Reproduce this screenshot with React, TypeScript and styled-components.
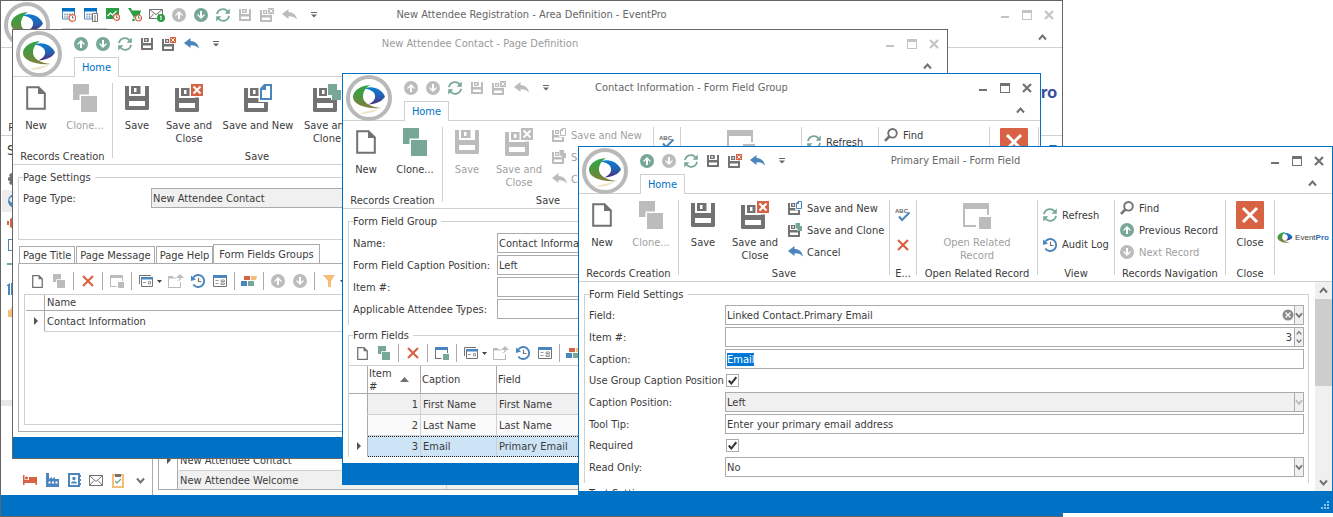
import React, { useEffect, useRef } from "react";
import styled, { createGlobalStyle, css } from "styled-components";

const C = {
  blue: "#0072c6",
  line: "#d0d0d0",
  border: "#ababab",
  text: "#3b3b3b",
  muted: "#9f9f9f",
  gray: "#727272",
  off: "#bcbcbc",
  green: "#77a797",
  steel: "#4a85bd",
  red: "#d86344",
  orange: "#f5bd78",
};

const GlobalStyle = createGlobalStyle`
  * { box-sizing: border-box; }
  html, body { margin: 0; background: #fff; overflow: hidden; }
  body, button, input, select, table, legend {
    font-family: "DejaVu Sans Condensed", "Noto Sans", sans-serif;
    font-size: 11px;
    line-height: 13px;
    color: ${C.text};
  }
  button { border: 0; padding: 0; background: none; }
  svg { display: block; flex: none; }
`;

/* ---------- icons ---------- */

type IconProps = { off?: boolean; small?: boolean };
const tone = (off: boolean | undefined, color: string) => (off ? C.off : color);

const ArrowIcon = ({ down, off }: { down?: boolean; off?: boolean }) => (
  <svg width="14" height="14" viewBox="0 0 14 14">
    <circle cx="7" cy="7" r="7" fill={tone(off, C.green)} />
    <path d="M7 3l3.500 3.500v1.700L8 5.900V11H6V5.900L3.500 8.200V6.500z" fill="#fff" transform={down ? "rotate(180 7 7)" : undefined} />
  </svg>
);

const RefreshIcon = () => (
  <svg width="14" height="14" viewBox="0 0 14 14" fill="none" stroke={C.green} strokeWidth="1.800">
    <path d="M1 6.200A6 6 0 0 1 11.500 3.300M13 7.800A6 6 0 0 1 2.500 10.700" />
    <path d="M13.800 .5v5.200H8.600zM.2 13.500V8.300h5.200z" fill={C.green} stroke="none" />
  </svg>
);

const saveBase =
  "M0 0h4v10h16V0h4v23l-1 1H1l-1-1zM4 15v5h16v-5zM6 0h9.500v8H6zM9 2v4h2.500V2z";

const SaveIcon = ({ off, small }: IconProps) => (
  <svg width={small ? 12 : 24} height={small ? 12 : 24} viewBox="0 0 24 24">
    <path d={saveBase} fill={tone(off, C.gray)} fillRule="evenodd" />
  </svg>
);

const SaveBadge = ({ off, small, kind }: IconProps & { kind: "close" | "new" | "clone" }) => (
  <svg width={small ? 14 : 28} height={small ? 14 : 28} viewBox="0 0 28 28">
    <path d={saveBase} transform="translate(0 4)" fill={tone(off, C.gray)} fillRule="evenodd" />
    {kind === "close" && (
      <>
        <path d="M14.500 0H28v13.500H14.500z" fill="#fff" />
        <path d="M16 0h12v12H16z" fill={tone(off, C.red)} />
        <path d="M18.500 2.500l7 7m0-7l-7 7" stroke="#fff" strokeWidth="2" />
      </>
    )}
    {kind === "new" && (
      <>
        <path d="M14.500 0H28v18H14.500z" fill="#fff" />
        <path d="M20.500 1H27v14H17V5z" fill="#fff" stroke={tone(off, C.steel)} strokeWidth="2" />
        <path d="M16 6V5l5-5h1v6z" fill={tone(off, C.steel)} />
      </>
    )}
    {kind === "clone" && (
      <>
        <path d="M14 0h11v6h3v10H18v-4h-4z" fill="#fff" />
        <path d="M15 0h9v6h4v10h-9v-5h-4z" fill={tone(off, C.green)} />
      </>
    )}
  </svg>
);

const UndoIcon = ({ off }: IconProps) => (
  <svg width="15" height="12" viewBox="0 0 15 12">
    <path d="M0 5L6.500 0v3c4.500 0 7.500 2.800 8.500 7.500C12.500 8 10 7.200 6.500 7.400V10z" fill={tone(off, C.steel)} />
  </svg>
);

const MoreIcon = () => (
  <svg width="6" height="6" viewBox="0 0 6 6" fill="#666">
    <path d="M0 0h6v1H0zM0 2.500h6L3 5.500z" />
  </svg>
);

const NewIcon = ({ small }: IconProps) => (
  <svg width={small ? 11 : 20} height={small ? 13 : 24} viewBox="0 0 20 24">
    <path d="M1.200 1.200h11.300l6.300 6.300v15.300H1.200z" fill="none" stroke={C.gray} strokeWidth={small ? 2.4 : 2} />
    <path d="M12 0l8 8h-8z" fill={C.gray} />
  </svg>
);

const CloneIcon = ({ off, small }: IconProps) => (
  <svg width={small ? 12 : 24} height={small ? 14 : 28} viewBox="0 0 24 28">
    <path d="M0 0h16v10.500H6.500V16H0zM8 12h16v16H8z" fill={tone(off, C.green)} />
  </svg>
);

const CrossIcon = () => (
  <svg width="12" height="12" viewBox="0 0 12 12" stroke={C.red} strokeWidth="2.200">
    <path d="M1 1l10 10M11 1L1 11" />
  </svg>
);

const OpenRelatedIcon = ({ off, small }: IconProps) => (
  <svg width={small ? 14 : 28} height={small ? 14 : 28} viewBox="0 0 28 28">
    <path d="M0 2h26v6H0z" fill={tone(off, C.steel)} />
    <path d="M0 8h2v16h11v2H0zM24 8h2v6h-2z" fill={tone(off, C.gray)} />
    <path d="M16 16h12v12H16z" fill={tone(off, C.green)} />
  </svg>
);

const SpellIcon = () => (
  <svg width="16" height="14" viewBox="0 0 16 14">
    <text x="0" y="5" fontSize="6" fontWeight="700" fontFamily="Liberation Sans, sans-serif" fill="#666">ABC</text>
    <path d="M4 8.500l3 3.500 7.500-7.500" fill="none" stroke={C.steel} strokeWidth="2" />
  </svg>
);

const HistoryIcon = () => (
  <svg width="15" height="14" viewBox="0 0 15 14" fill="none" stroke={C.steel} strokeWidth="1.900">
    <path d="M2.300 3.500A6 6 0 1 1 2.300 10.500" />
    <path d="M0 1.500l5 4L0 7z" fill={C.steel} stroke="none" />
    <path d="M7.500 3.800v3.700h3" stroke={C.gray} strokeWidth="1.200" />
  </svg>
);

const FindIcon = () => (
  <svg width="14" height="14" viewBox="0 0 14 14" fill="none" stroke={C.gray}>
    <circle cx="8.500" cy="5.300" r="4.300" strokeWidth="1.900" />
    <path d="M5.300 8.500L1 12.800" strokeWidth="2.600" />
  </svg>
);

const BigCloseIcon = () => (
  <svg width="28" height="28" viewBox="0 0 28 28">
    <rect width="28" height="28" rx="1" fill={C.red} />
    <path d="M7 7l14 14M21 7L7 21" stroke="#fff" strokeWidth="3" />
  </svg>
);

const ViewsIcon = () => (
  <svg width="14" height="12" viewBox="0 0 14 12" fill="none">
    <path d="M.5 9V.5H12" stroke={C.gray} />
    <path d="M2.500 2.500h11v9h-11z" fill="#fff" stroke={C.gray} />
    <path d="M2 2h12v2.500H2z" fill={C.steel} />
    <path d="M4 7.500h3M9.500 6.500h2v2.500h-2z" stroke="#999" />
  </svg>
);

const ExportIcon = () => (
  <svg width="16" height="14" viewBox="0 0 16 14" fill={C.off}>
    <path d="M0 2h5v1.500h3v1H1V13h11V8h1v6H0z" />
    <path d="M12 0l4 4h-3c0 2-1 3-4 3 2-1 2.500-1.500 2.500-3H8z" />
  </svg>
);

const FormIcon = () => (
  <svg width="14" height="12" viewBox="0 0 14 12" fill="none">
    <path d="M.5 .5h13v11H.5z" stroke={C.gray} />
    <path d="M0 0h14v3H0z" fill={C.steel} />
    <path d="M2.500 5.500h3M2.500 8.500h3M8 5h3.500v1.500H8zM8 8h3.500v1.500H8z" stroke="#999" />
  </svg>
);

const BlocksIcon = () => (
  <svg width="16" height="12" viewBox="0 0 16 12">
    <path d="M3 1h6v4H3z" fill={C.red} />
    <path d="M10 1h6l-1 4h-5z" fill={C.orange} />
    <path d="M0 6h6v5H0z" fill={C.steel} />
    <path d="M7 6h6v5H7z" fill={C.green} />
  </svg>
);

const FilterIcon = () => (
  <svg width="12" height="12" viewBox="0 0 12 12" fill={C.orange}>
    <path d="M0 0h12L8 6v6H5V6z" />
  </svg>
);

const Caret = () => (
  <svg width="5" height="3" viewBox="0 0 5 3" fill="#444">
    <path d="M0 0h5L2.500 3z" />
  </svg>
);

const Chevron = ({ up, color = C.gray, size = 9 }: { up?: boolean; color?: string; size?: number }) => (
  <svg width={size} height={size} viewBox="0 0 9 9" fill="none" stroke={color} strokeWidth="2">
    <path d={up ? "M1 6.500l3.500-4 3.500 4" : "M1 2.500l3.500 4 3.500-4"} />
  </svg>
);

const Swoosh = ({ id, width, shadow }: { id: string; width: number; shadow?: boolean }) => (
  <svg width={width} height={width} viewBox="0 0 34 34">
    <defs>
      <linearGradient id={`${id}g`} x1="0" y1="0" x2="0" y2="1">
        <stop offset="0" stopColor="#2ca648" />
        <stop offset=".5" stopColor="#4f9440" />
        <stop offset="1" stopColor="#82803a" />
      </linearGradient>
      <linearGradient id={`${id}b`} x1="0" y1="0" x2="0" y2="1">
        <stop offset="0" stopColor="#0b7fd6" />
        <stop offset=".6" stopColor="#2a5aa8" />
        <stop offset="1" stopColor="#4b2a7b" />
      </linearGradient>
    </defs>
    {shadow && <path d="M8 33c2-2 8-3 19-5-4 3-12 5-19 5z" fill="#f0e4c8" />}
    <path d="M18 4C8 4.500 1 10 1 16c0 7 12 12.500 28 11-11-1-18-5.500-18-11.500C11 10.500 14 6.500 18 4z" fill={`url(#${id}g)`} />
    <path d="M13 7.500C21 4 30 8.500 33 15.500 31 20 24 23 16 23.500c5-2 7.500-5 7-9C22.500 10.500 18 8.500 13 7.500z" fill={`url(#${id}b)`} />
  </svg>
);

/* ---------- window chrome ---------- */

const Desktop = styled.main`
  position: relative;
  min-height: 100vh;
  overflow: hidden;
`;

const Frame = styled.section<{ $top: number; $left: number; $right: number; $bottom: number; $dark?: boolean }>`
  position: absolute;
  top: ${(p) => p.$top}px;
  left: ${(p) => p.$left}px;
  right: ${(p) => p.$right}px;
  bottom: ${(p) => p.$bottom}px;
  display: flex;
  flex-direction: column;
  overflow: hidden;
  background: #fff;
  border: 1px solid ${(p) => (p.$dark ? "#666" : C.blue)};
`;

const Orb = styled.button`
  position: absolute;
  top: 1px;
  left: 3px;
  width: 46px;
  height: 46px;
  display: grid;
  place-items: center;
  background: #fff;
  border: 4px solid #b9b9b9;
  border-radius: 50%;
`;

const TitleBar = styled.header`
  flex: none;
  height: 27px;
  display: grid;
  grid-template-columns: 1fr auto 1fr;
  align-items: center;
`;

const QuickBar = styled.div`
  display: flex;
  padding-left: 57px;
`;

const QuickButton = styled.button`
  width: 22px;
  height: 22px;
  display: grid;
  place-items: center;
`;

const MoreButton = styled(QuickButton)`
  width: 28px;
`;

const Title = styled.h1<{ $dim?: boolean }>`
  margin: 0;
  font-size: 11px;
  font-weight: 400;
  color: ${(p) => (p.$dim ? "#9a9a9a" : "#666")};
`;

const WindowButtons = styled.div`
  display: flex;
  justify-content: flex-end;
  padding-right: 2px;
`;

const TabRow = styled.nav`
  flex: none;
  height: 20px;
  display: flex;
  justify-content: space-between;
  padding: 0 15px 0 61px;
  border-bottom: 1px solid ${C.line};
`;

const HomeTab = styled.button`
  height: 20px;
  width: 45px;
  background: #fff;
  border: 1px solid ${C.line};
  border-bottom: 0;
  color: ${C.blue};
`;

const Body = styled.div`
  flex: 1;
  min-height: 0;
  display: flex;
  flex-direction: column;
  padding: 6px 5px 5px;
`;

const StatusBar = styled.footer`
  flex: none;
  display: flex;
  justify-content: flex-end;
  align-items: flex-end;
  height: 21px;
  padding: 2px;
  background: ${C.blue};
`;

const Grip = () => (
  <svg width="9" height="9" viewBox="0 0 9 9" fill="#8fc0e6">
    <path d="M6 0h2v2H6zM3 3h2v2H3zM6 3h2v2H6zM0 6h2v2H0zM3 6h2v2H3zM6 6h2v2H6z" />
  </svg>
);

type WindowProps = {
  id: string;
  title: string;
  at: [number, number, number, number];
  quick: React.ReactNode[];
  ribbon: React.ReactNode;
  dark?: boolean;
  dimTitle?: boolean;
  children: React.ReactNode;
};

const Window = ({ id, title, at, quick, ribbon, dark, dimTitle, children }: WindowProps) => {
  const ink = dark ? "#c4c4c4" : C.gray;
  return (
    <Frame $top={at[0]} $right={at[1]} $bottom={at[2]} $left={at[3]} $dark={dark} aria-label={title}>
      <TitleBar>
        <QuickBar>
          {quick.map((icon, i) => (
            <QuickButton key={i}>{icon}</QuickButton>
          ))}
          <MoreButton aria-label="Customize">
            <MoreIcon />
          </MoreButton>
        </QuickBar>
        <Title $dim={dimTitle}>{title}</Title>
        <WindowButtons>
          <QuickButton aria-label="Minimize">
            <svg width="10" height="10" viewBox="0 0 10 10"><path d="M1 6h8v2H1z" fill={ink} /></svg>
          </QuickButton>
          <QuickButton aria-label="Maximize">
            <svg width="10" height="10" viewBox="0 0 10 10"><path d="M0 0h10v10H0zM1 3v6h8V3z" fill={ink} fillRule="evenodd" /></svg>
          </QuickButton>
          <QuickButton aria-label="Close window">
            <svg width="10" height="10" viewBox="0 0 10 10" stroke={ink} strokeWidth="2.200"><path d="M1 1l8 8M9 1L1 9" /></svg>
          </QuickButton>
        </WindowButtons>
      </TitleBar>
      <TabRow>
        <HomeTab>Home</HomeTab>
        <button aria-label="Collapse ribbon">
          <Chevron up />
        </button>
      </TabRow>
      {ribbon}
      {children}
      <StatusBar>
        <Grip />
      </StatusBar>
      <Orb aria-label="Application menu">
        <Swoosh id={id} width={34} shadow />
      </Orb>
    </Frame>
  );
};

/* ---------- ribbon ---------- */

const RibbonBar = styled.div`
  flex: none;
  display: flex;
  height: 88px;
  border-bottom: 1px solid ${C.line};
`;

const Group = styled.section<{ $width: number }>`
  flex: none;
  width: ${(p) => p.$width}px;
  display: flex;
  flex-direction: column;
  justify-content: space-between;
  padding: 3px 0 1px;
`;

const GroupItems = styled.div<{ $center?: boolean }>`
  height: 66px;
  display: flex;
  justify-content: ${(p) => (p.$center ? "center" : "flex-start")};
`;

const GroupCaption = styled.div`
  text-align: center;
  white-space: nowrap;
`;

const Divider = styled.span`
  flex: none;
  width: 1px;
  margin: 6px 0;
  background: ${C.line};
`;

const BigButton = styled.button<{ $width: number }>`
  flex: none;
  width: ${(p) => p.$width}px;
  display: flex;
  flex-direction: column;
  align-items: center;
  gap: 7px;
  padding-top: 4px;
  &:disabled { color: ${C.muted}; }
`;

const IconBox = styled.span`
  height: 28px;
  display: grid;
  place-items: center;
`;

const SmallList = styled.div`
  flex: 1;
  display: flex;
  flex-direction: column;
  justify-content: space-evenly;
`;

const SmallButton = styled.button`
  height: 22px;
  display: grid;
  grid-template-columns: 15px auto;
  gap: 4px;
  align-items: center;
  justify-items: start;
  justify-content: start;
  padding-left: 5px;
  white-space: nowrap;
  &:disabled { color: ${C.muted}; }
`;

const Brand = styled.div<{ $large?: boolean }>`
  flex: 1;
  display: flex;
  align-items: center;
  justify-content: ${(p) => (p.$large ? "flex-end" : "center")};
  gap: 2px;
  padding-right: ${(p) => (p.$large ? 5 : 1)}px;
  font-family: ${(p) => (p.$large ? "Lato" : "\"Liberation Sans\"")}, sans-serif;
  font-size: ${(p) => (p.$large ? 17 : 8)}px;
  line-height: 20px;
  b {
    font-weight: ${(p) => (p.$large ? 900 : 700)};
    color: ${(p) => (p.$large ? "#3a4f9c" : "#2f6fb5")};
  }
`;

const BrandName = ({ id, large }: { id: string; large?: boolean }) => (
  <Brand $large={large}>
    <Swoosh id={id} width={large ? 34 : 16} />
    <span>
      Event<b>Pro</b>
    </span>
  </Brand>
);

const Big = ({ icon, label, width, off }: { icon: React.ReactNode; label: string; width: number; off?: boolean }) => (
  <BigButton $width={width} disabled={off}>
    <IconBox>{icon}</IconBox>
    <span>{label}</span>
  </BigButton>
);

const Small = ({ icon, label, off }: { icon: React.ReactNode; label: string; off?: boolean }) => (
  <SmallButton disabled={off}>
    {icon}
    <span>{label}</span>
  </SmallButton>
);

const IconOnly = styled.button`
  height: 22px;
  display: grid;
  place-items: center;
`;

const RecordsCreation = ({ cloneOff }: { cloneOff?: boolean }) => (
  <Group $width={99}>
    <GroupItems>
      <Big icon={<NewIcon />} label="New" width={46} />
      <Big icon={<CloneIcon off={cloneOff} />} label="Clone..." width={52} off={cloneOff} />
    </GroupItems>
    <GroupCaption>Records Creation</GroupCaption>
  </Group>
);

const FullRibbon = ({ brand, saveOff, cloneOff }: { brand?: boolean; saveOff?: boolean; cloneOff?: boolean }) => (
  <RibbonBar>
    <RecordsCreation cloneOff={cloneOff} />
    <Divider />
    <Group $width={210}>
      <GroupItems>
        <Big icon={<SaveIcon off={saveOff} />} label="Save" width={48} off={saveOff} />
        <Big icon={<SaveBadge kind="close" off={saveOff} />} label="Save and Close" width={56} off={saveOff} />
        <SmallList>
          <Small icon={<SaveBadge kind="new" small off={saveOff} />} label="Save and New" off={saveOff} />
          <Small icon={<SaveBadge kind="clone" small off={saveOff} />} label="Save and Clone" off={saveOff} />
          <Small icon={<UndoIcon off={saveOff} />} label="Cancel" off={saveOff} />
        </SmallList>
      </GroupItems>
      <GroupCaption>Save</GroupCaption>
    </Group>
    <Divider />
    <Group $width={26}>
      <GroupItems>
        <SmallList>
          <IconOnly aria-label="Check spelling"><SpellIcon /></IconOnly>
          <IconOnly aria-label="Delete"><CrossIcon /></IconOnly>
        </SmallList>
      </GroupItems>
      <GroupCaption>E...</GroupCaption>
    </Group>
    <Divider />
    <Group $width={120}>
      <GroupItems $center>
        <Big icon={<OpenRelatedIcon off />} label="Open Related Record" width={80} off />
      </GroupItems>
      <GroupCaption>Open Related Record</GroupCaption>
    </Group>
    <Divider />
    <Group $width={76}>
      <GroupItems>
        <SmallList>
          <Small icon={<RefreshIcon />} label="Refresh" />
          <Small icon={<HistoryIcon />} label="Audit Log" />
        </SmallList>
      </GroupItems>
      <GroupCaption>View</GroupCaption>
    </Group>
    <Divider />
    <Group $width={110}>
      <GroupItems>
        <SmallList>
          <Small icon={<FindIcon />} label="Find" />
          <Small icon={<ArrowIcon />} label="Previous Record" />
          <Small icon={<ArrowIcon down off />} label="Next Record" off />
        </SmallList>
      </GroupItems>
      <GroupCaption>Records Navigation</GroupCaption>
    </Group>
    <Divider />
    <Group $width={48}>
      <GroupItems>
        <Big icon={<BigCloseIcon />} label="Close" width={48} />
      </GroupItems>
      <GroupCaption>Close</GroupCaption>
    </Group>
    <Divider />
    {brand && <BrandName id="field-brand" />}
  </RibbonBar>
);

const PageRibbon = () => (
  <RibbonBar>
    <RecordsCreation cloneOff />
    <Divider />
    <Group $width={288}>
      <GroupItems>
        <Big icon={<SaveIcon />} label="Save" width={48} />
        <Big icon={<SaveBadge kind="close" />} label="Save and Close" width={56} />
        <Big icon={<SaveBadge kind="new" />} label="Save and New" width={82} />
        <Big icon={<SaveBadge kind="clone" />} label="Save and Clone" width={56} />
      </GroupItems>
      <GroupCaption>Save</GroupCaption>
    </Group>
    <Divider />
  </RibbonBar>
);

const AreaRibbon = () => (
  <RibbonBar>
    <RecordsCreation />
    <BrandName id="area-brand" large />
  </RibbonBar>
);

/* ---------- forms ---------- */

const Fieldset = styled.fieldset<{ $open?: boolean; $pad?: number; $end?: number }>`
  flex: none;
  min-width: 0;
  display: flex;
  flex-direction: column;
  gap: 2px;
  margin: 0 0 4px;
  padding: ${(p) => p.$pad ?? 4}px 4px ${(p) => p.$end ?? 6}px;
  border: 1px solid ${C.line};
  ${(p) => p.$open && css`border-bottom: 0;`}
  legend { padding: 0 4px 0 0; }
`;

const Row = styled.div<{ $label: number; $check?: boolean }>`
  display: grid;
  grid-template-columns: ${(p) => p.$label}px minmax(0, 1fr);
  align-items: center;
  height: ${(p) => (p.$check ? 19 : 20)}px;
  white-space: nowrap;
`;

const TextBox = styled.input`
  width: 100%;
  height: 20px;
  padding: 0 1px;
  background: #fff;
  border: 1px solid ${C.border};
  border-radius: 0;
  outline: 0;
  &:disabled { background: #f0f0f0; color: ${C.text}; }
  &::selection { background: #0078d7; color: #fff; }
`;

const ComboFrame = styled.div<{ $off?: boolean }>`
  display: flex;
  align-items: center;
  height: 20px;
  background: ${(p) => (p.$off ? "#f0f0f0" : "#fff")};
  border: 1px solid ${C.border};
`;

const ComboSelect = styled.select`
  flex: 1;
  min-width: 0;
  padding: 0 1px;
  appearance: none;
  background: none;
  border: 0;
  outline: 0;
  &:disabled { color: ${C.text}; opacity: 1; }
`;

const NumberBox = styled.input`
  flex: 1;
  min-width: 0;
  padding: 0 2px;
  background: none;
  border: 0;
  outline: 0;
  text-align: right;
`;

const ComboArrow = styled.span`
  align-self: stretch;
  width: 9px;
  display: flex;
  flex-direction: column;
  align-items: center;
  justify-content: space-evenly;
  background: #f0f0f0;
  border-left: 1px solid ${C.border};
`;

const CheckCell = styled.span`
  display: grid;
  width: 15px;
  padding: 0 1px;
  place-items: center;
  > * { grid-area: 1 / 1; }
  svg { pointer-events: none; }
`;

const CheckInput = styled.input`
  width: 13px;
  height: 13px;
  margin: 0;
  appearance: none;
  background: #fff;
  border: 1px solid ${C.border};
`;

const Combo = ({ id, value, off, clear }: { id: string; value: string; off?: boolean; clear?: boolean }) => (
  <ComboFrame $off={off}>
    <ComboSelect id={id} disabled={off} defaultValue={value}>
      <option>{value}</option>
    </ComboSelect>
    {clear && (
      <button aria-label="Clear">
        <svg width="12" height="12" viewBox="0 0 12 12">
          <circle cx="6" cy="6" r="5.500" fill="#8a8a8a" />
          <path d="M3.500 3.500l5 5m0-5l-5 5" stroke="#fff" strokeWidth="1.200" />
        </svg>
      </button>
    )}
    <ComboArrow>
      <Chevron size={8} color={off ? "#bbb" : C.gray} />
    </ComboArrow>
  </ComboFrame>
);

const Check = ({ id }: { id: string }) => (
  <CheckCell>
    <CheckInput id={id} type="checkbox" defaultChecked />
    <svg width="9" height="9" viewBox="0 0 9 9" fill="none" stroke="#333" strokeWidth="2">
      <path d="M.8 4.500L3.300 7.500 8.300 1.200" />
    </svg>
  </CheckCell>
);

/* ---------- toolbar and grids ---------- */

const Toolbar = styled.div<{ $indent: number }>`
  flex: none;
  display: flex;
  align-items: center;
  height: 22px;
  padding-left: ${(p) => p.$indent}px;
  overflow: hidden;
`;

const ToolSplit = styled.span`
  flex: none;
  width: 1px;
  height: 18px;
  margin: 0 3px;
  background: ${C.border};
`;

const ToolButton = styled.button`
  flex: none;
  width: 22px;
  height: 22px;
  display: grid;
  place-items: center;
`;

const CaretButton = styled(ToolButton)`
  width: 8px;
  justify-items: start;
`;

const RecordToolbar = ({ indent, editable }: { indent: number; editable?: boolean }) => (
  <Toolbar $indent={indent} role="toolbar">
    <ToolButton aria-label="New"><NewIcon small /></ToolButton>
    <ToolButton aria-label="Clone"><CloneIcon small off={!editable} /></ToolButton>
    <ToolSplit />
    <ToolButton aria-label="Delete"><CrossIcon /></ToolButton>
    <ToolSplit />
    <ToolButton aria-label="Open related record"><OpenRelatedIcon small off={!editable} /></ToolButton>
    <ToolSplit />
    <ToolButton aria-label="Views"><ViewsIcon /></ToolButton>
    <CaretButton aria-label="More views"><Caret /></CaretButton>
    <ToolButton aria-label="Export"><ExportIcon /></ToolButton>
    <ToolButton aria-label="History"><HistoryIcon /></ToolButton>
    <ToolButton aria-label="Layout"><FormIcon /></ToolButton>
    <ToolSplit />
    <ToolButton aria-label="Group"><BlocksIcon /></ToolButton>
    <ToolSplit />
    <ToolButton aria-label="Move up"><ArrowIcon off /></ToolButton>
    <ToolButton aria-label="Move down"><ArrowIcon off down /></ToolButton>
    <ToolSplit />
    <ToolButton aria-label="Filter"><FilterIcon /></ToolButton>
    <CaretButton aria-label="Filter options"><Caret /></CaretButton>
  </Toolbar>
);

const Marker = () => (
  <svg width="4" height="8" viewBox="0 0 4 8" fill="#555">
    <path d="M0 0l4 4-4 4z" />
  </svg>
);

const DataTable = styled.table<{ $selector: number }>`
  width: 100%;
  table-layout: fixed;
  border-collapse: separate;
  border-spacing: 0;
  th, td {
    height: 21px;
    padding: 0 2px;
    text-align: left;
    font-weight: 400;
    white-space: nowrap;
    overflow: hidden;
    border-right: 1px solid ${C.line};
    border-bottom: 1px solid ${C.line};
  }
  th { border-color: ${C.border}; }
  th:first-child, td:first-child {
    width: ${(p) => p.$selector}px;
    padding-left: 8px;
    background: #fff;
    border-right-color: ${C.border};
  }
  td:first-child { border-bottom-color: transparent; }
`;

const PageTable = styled(DataTable)`
  th { height: 16px; }
`;

const FieldTable = styled(DataTable)`
  border-top: 1px solid ${C.line};
  th { height: 28px; padding: 0 1px; white-space: normal; }
  th:nth-child(2) { width: 53px; padding-right: 11px; }
  th:nth-child(3) { width: 76px; }
  td:nth-child(2) { text-align: right; }
`;

const HeadCell = styled.span`
  display: flex;
  align-items: center;
  justify-content: space-between;
`;

const FieldRow = styled.tr<{ $bg: string; $current?: boolean }>`
  td { background: ${(p) => p.$bg}; }
  ${(p) =>
    p.$current &&
    css`
      td:not(:first-child) {
        border-bottom: 1px dotted #222;
        background-image: linear-gradient(90deg, #222 50%, transparent 50%);
        background-size: 2px 1px;
        background-repeat: repeat-x;
      }
    `}
`;

/* ---------- page window ---------- */

const PageTabs = styled.div`
  flex: none;
  display: flex;
  align-items: flex-end;
  height: 19px;
  padding-left: 1px;
`;

const PageTab = styled.button<{ $active?: boolean }>`
  height: 17px;
  padding: 0 3px;
  margin-right: 1px;
  background: #fff;
  border: 1px solid ${C.border};
  border-bottom: 0;
  white-space: nowrap;
  ${(p) =>
    p.$active &&
    css`
      height: 20px;
      margin: 0 0 -1px -1px;
      padding: 0 5px;
    `}
`;

const PagePanel = styled.div`
  flex: 1;
  display: flex;
  flex-direction: column;
  gap: 2px;
  padding: 6px 5px 6px;
  border: 1px solid ${C.border};
`;

const GridBox = styled.div`
  flex: 1;
  padding-left: 1px;
  border: 1px solid ${C.line};
`;

/* ---------- area window ---------- */

const AreaBody = styled.div`
  flex: 1;
  min-height: 0;
  display: flex;
`;

const Sidebar = styled.aside`
  flex: none;
  width: 152px;
  display: flex;
  flex-direction: column;
  border-right: 1px solid ${C.border};
`;

const SideTitle = styled.h2`
  margin: 0;
  height: 32px;
  padding: 6px;
  font-size: 14px;
  line-height: 17px;
  font-weight: 400;
`;

const SideItem = styled.button<{ $current?: boolean }>`
  flex: none;
  height: 22px;
  margin-left: 1px;
  padding-left: 5px;
  background: ${(p) => (p.$current ? "#ededed" : "#fff")};
`;

const SideFill = styled.div`
  flex: 1;
`;

const Splitter = styled.div`
  flex: none;
  height: 6px;
  margin-bottom: 60px;
  background: #e6e8ea;
`;

const SideFooter = styled.div`
  flex: none;
  display: flex;
  height: 29px;
  padding: 3px 0 4px 18px;
`;

const AreaMain = styled.div`
  flex: 1;
  display: flex;
  flex-direction: column;
  justify-content: space-between;
  padding: 8px 5px 5px;
`;

const AreaMenu = styled.button`
  align-self: flex-end;
  height: 6px;
`;

const AreaTable = styled(DataTable)`
  border-left: 1px solid ${C.border};
  border-bottom: 1px solid ${C.border};
  td { padding: 0 2px; }
  td:nth-child(2) { width: 269px; }
  tr:last-child td { height: 18px; border-bottom: 0; }
  tr:last-child td:not(:first-child) { background: #f0f0f0; }
`;

const BedIcon = () => (
  <svg width="14" height="12" viewBox="0 0 14 12" fill={C.red}>
    <path d="M0 1h1.500v5H14v5h-1.500V9h-11v2H0z" />
    <path d="M6 3h8v3H6z" />
    <circle cx="3.500" cy="4" r="1.600" />
  </svg>
);

const FactoryIcon = () => (
  <svg width="13" height="14" viewBox="0 0 13 14">
    <path d="M0 0h3v6l3-2v2l3-2v2h4v8H0z" fill={C.steel} />
    <path d="M2.500 8.500h2v2h-2zM6 8.500h2v2H6zM9.500 8.500h2v2h-2z" fill="#fff" />
  </svg>
);

const ContactIcon = () => (
  <svg width="13" height="14" viewBox="0 0 13 14">
    <path d="M1 1h10v12H1z" fill="none" stroke={C.steel} strokeWidth="2" />
    <circle cx="6" cy="5.500" r="1.700" fill={C.steel} />
    <path d="M3 10.500c0-3 6-3 6 0zM12 2h1v2h-1zM12 6h1v2h-1zM12 10h1v2h-1z" fill={C.steel} />
  </svg>
);

const MailIcon = () => (
  <svg width="14" height="11" viewBox="0 0 14 11" fill="none" stroke={C.gray}>
    <path d="M.5 .5h13v10H.5zM.5 .5L7 6.500l6.500-6M.5 10.500l4.500-5M13.500 10.500L9 5.500" />
  </svg>
);

const TaskIcon = () => (
  <svg width="12" height="15" viewBox="0 0 12 15">
    <path d="M1 2h10v12H1z" fill="#fff" stroke={C.orange} strokeWidth="2" />
    <path d="M3 1h6v3H3z" fill={C.gray} />
    <path d="M3 8l2 2 4-4" fill="none" stroke={C.green} strokeWidth="1.300" />
  </svg>
);

const CalendarIcon = ({ clock }: { clock?: boolean }) => (
  <svg width="14" height="14" viewBox="0 0 14 14">
    <path d="M.5 1h12v10H.5z" fill="#fff" stroke={C.steel} />
    <path d="M0 0h13v3.500H0z" fill={C.blue} />
    <path d="M3 5v5M5.500 5v5M8 5v5M10.500 5v5M2 6.500h9M2 9h9" stroke="#9ab" strokeWidth=".8" />
    {clock ? (
      <>
        <circle cx="10.500" cy="10" r="3.300" fill="#fff" stroke={C.red} strokeWidth="1.200" />
        <path d="M10.500 8v2h1.500" fill="none" stroke="#555" strokeWidth=".8" />
      </>
    ) : (
      <path d="M8.500 5.500h5v8h-5zM10 8h2M10 10h2M10 12h2" fill="#fff" stroke={C.gray} />
    )}
  </svg>
);

const ChartClockIcon = () => (
  <svg width="14" height="13" viewBox="0 0 14 13">
    <path d="M0 0h13v11H0z" fill="#2b9d44" />
    <path d="M1.500 8l3-3 2 2 4-4" fill="none" stroke="#fff" strokeWidth="1.200" />
    <circle cx="10.500" cy="9.300" r="3" fill="#fff" stroke={C.red} strokeWidth="1.200" />
    <path d="M10.500 7.500v2H12" fill="none" stroke="#555" strokeWidth=".8" />
  </svg>
);

const CartIcon = () => (
  <svg width="14" height="14" viewBox="0 0 14 14">
    <path d="M0 0h3l1 2.500h9L11.500 8H5z" fill="#2b9d44" />
    <path d="M5 9h5" stroke="#2b9d44" strokeWidth="1.300" />
    <circle cx="5.500" cy="12" r="1.300" fill="#2b9d44" />
    <circle cx="10.500" cy="10" r="3" fill="#fff" stroke={C.red} strokeWidth="1.200" />
    <path d="M10.500 8.200v2H12" fill="none" stroke="#555" strokeWidth=".8" />
  </svg>
);

const MailCountIcon = () => (
  <svg width="16" height="14" viewBox="0 0 16 14">
    <path d="M.5 1.500h13v9H.5zM.5 1.500L7 6.500l6.500-5M.5 10.500l4.500-5M13.500 10.500L9 5.500" fill="none" stroke={C.gray} />
    <circle cx="12" cy="10" r="4" fill="#2b9d44" />
    <path d="M11 8.500l1-.5v4" fill="none" stroke="#fff" />
  </svg>
);

const SideGlyph = ({ d, color }: { d: string; color: string }) => (
  <svg width="16" height="16" viewBox="0 0 16 16" fill={color} fillRule="evenodd">
    <path d={d} />
  </svg>
);

const sideItems = [
  { name: "General", color: C.gray, d: "M6.500 1h3l.5 2 2-1 2 2-1 2 2 .5v3l-2 .5 1 2-2 2-2-1-.5 2h-3L6 13l-2 1-2-2 1-2-2-.5v-3L3 6 2 4l2-2 2 1zM8 5.500a2.500 2.500 0 1 0 .1 0z" },
  { name: "Web", color: C.steel, d: "M8 1a7 7 0 1 0 .1 0zM4 4l3 1 1 3-3 2-3-3z" },
  { name: "Audio", color: C.red, d: "M0 6h2v4H0zM3 4l5-3v14l-5-3z" },
  { name: "Codes", color: C.steel, d: "M1 2h14v12H1zM2 3v10h12V3zM8 5a3 3 0 1 0 .1 0z" },
  { name: "Flow", color: C.green, d: "M0 4h5V2l4 3-4 3V6H0zM8 10h6v4H8z" },
  { name: "Venue", color: C.steel, d: "M0 4l3-2v12H1V5H0zM4 2h10v12H4z" },
  { name: "Locks", color: C.orange, d: "M1 7h2l3-5h6v12H1z" },
];

/* ---------- scrolling area ---------- */

const ScrollArea = styled.div`
  flex: 1;
  min-height: 0;
  display: flex;
`;

const ScrollBody = styled.div`
  flex: 1;
  min-width: 0;
  padding: 6px 6px 0 5px;
  overflow: hidden;
`;

const ScrollTrack = styled.div`
  flex: none;
  width: 17px;
  display: flex;
  flex-direction: column;
  background: #f0f0f0;
`;

const ScrollArrow = styled.button`
  height: 17px;
  display: grid;
  place-items: center;
`;

const ScrollThumb = styled.div`
  height: 87px;
  margin-bottom: auto;
  background: #cdcdcd;
`;

const FieldsBox = styled(Fieldset)`
  gap: 1px;
  margin: 0;
  padding: 0;
  border-bottom: 0;
  legend { margin-left: 4px; }
`;

/* ---------- app ---------- */

export default function App() {
  const caption = useRef<HTMLInputElement>(null);

  useEffect(() => {
    caption.current?.focus({ preventScroll: true });
    caption.current?.select();
  }, []);

  return (
    <Desktop>
      <GlobalStyle />

      <Window
        id="area"
        title="New Attendee Registration - Area Definition - EventPro"
        at={[0, 270, 0, 0]}
        dark
        quick={[
          <CalendarIcon clock />, <CalendarIcon />, <ChartClockIcon />, <CartIcon />, <MailCountIcon />,
          <ArrowIcon off />, <ArrowIcon down />, <RefreshIcon />, <SaveIcon small off />,
          <SaveBadge small off kind="close" />, <UndoIcon off />,
        ]}
        ribbon={<AreaRibbon />}
      >
        <AreaBody>
          <Sidebar>
            <SideTitle>Settings</SideTitle>
            {sideItems.map((item, i) => (
              <SideItem key={item.name} $current={i === 1} aria-label={item.name}>
                <SideGlyph d={item.d} color={item.color} />
              </SideItem>
            ))}
            <SideFill />
            <Splitter />
            <SideFooter>
              <ToolButton aria-label="Housing"><BedIcon /></ToolButton>
              <ToolButton aria-label="Companies"><FactoryIcon /></ToolButton>
              <ToolButton aria-label="Contacts"><ContactIcon /></ToolButton>
              <ToolButton aria-label="Mail"><MailIcon /></ToolButton>
              <ToolButton aria-label="Tasks"><TaskIcon /></ToolButton>
              <ToolButton aria-label="More areas"><Chevron /></ToolButton>
            </SideFooter>
          </Sidebar>
          <AreaMain>
            <AreaMenu aria-label="Area menu">
              <svg width="8" height="5" viewBox="0 0 8 5" fill={C.blue}><path d="M0 0h8L4 5z" /></svg>
            </AreaMenu>
            <AreaTable $selector={19}>
              <tbody>
                <tr>
                  <td><Marker /></td>
                  <td>New Attendee Contact</td>
                  <td />
                </tr>
                <tr>
                  <td />
                  <td>New Attendee Welcome</td>
                  <td />
                </tr>
              </tbody>
            </AreaTable>
          </AreaMain>
        </AreaBody>
      </Window>

      <Window
        id="page"
        title="New Attendee Contact - Page Definition"
        at={[29, 385, 58, 12]}
        dark
        dimTitle
        quick={[
          <ArrowIcon />, <ArrowIcon down />, <RefreshIcon />, <SaveIcon small />,
          <SaveBadge small kind="close" />, <UndoIcon />,
        ]}
        ribbon={<PageRibbon />}
      >
        <Body>
          <Fieldset $end={31}>
            <legend>Page Settings</legend>
            <Row $label={128}>
              <label htmlFor="page-type">Page Type:</label>
              <TextBox id="page-type" defaultValue="New Attendee Contact" disabled />
            </Row>
          </Fieldset>
          <PageTabs role="tablist">
            <PageTab role="tab">Page Title</PageTab>
            <PageTab role="tab">Page Message</PageTab>
            <PageTab role="tab">Page Help</PageTab>
            <PageTab role="tab" $active aria-selected>Form Fields Groups</PageTab>
          </PageTabs>
          <PagePanel>
            <RecordToolbar indent={2} />
            <GridBox>
              <PageTable $selector={19}>
                <thead>
                  <tr><th /><th>Name</th></tr>
                </thead>
                <tbody>
                  <tr><td><Marker /></td><td>Contact Information</td></tr>
                </tbody>
              </PageTable>
            </GridBox>
          </PagePanel>
        </Body>
      </Window>

      <Window
        id="group"
        title="Contact Information - Form Field Group"
        at={[73, 292, 32, 342]}
        quick={[
          <ArrowIcon off />, <ArrowIcon off down />, <RefreshIcon />, <SaveIcon small off />,
          <SaveBadge small off kind="close" />, <UndoIcon off />,
        ]}
        ribbon={<FullRibbon saveOff />}
      >
        <Body>
          <Fieldset $open $pad={5}>
            <legend>Form Field Group</legend>
            <Row $label={144}>
              <label htmlFor="group-name">Name:</label>
              <TextBox id="group-name" defaultValue="Contact Information" />
            </Row>
            <Row $label={144}>
              <label htmlFor="group-caption">Form Field Caption Position:</label>
              <Combo id="group-caption" value="Left" />
            </Row>
            <Row $label={144}>
              <label htmlFor="group-item">Item #:</label>
              <TextBox id="group-item" />
            </Row>
            <Row $label={144}>
              <label htmlFor="group-types">Applicable Attendee Types:</label>
              <TextBox id="group-types" />
            </Row>
          </Fieldset>
          <FieldsBox>
            <legend>Form Fields</legend>
            <RecordToolbar indent={2} editable />
            <FieldTable $selector={19}>
              <thead>
                <tr>
                  <th />
                  <th>
                    <HeadCell>
                      <span>Item<br />#</span>
                      <svg width="9" height="5" viewBox="0 0 9 5" fill={C.gray}><path d="M4.500 0L9 5H0z" /></svg>
                    </HeadCell>
                  </th>
                  <th>Caption</th>
                  <th>Field</th>
                </tr>
              </thead>
              <tbody>
                <FieldRow $bg="#f0f0f0"><td /><td>1</td><td>First Name</td><td>First Name</td></FieldRow>
                <FieldRow $bg="#fafafa"><td /><td>2</td><td>Last Name</td><td>Last Name</td></FieldRow>
                <FieldRow $bg="#cde4f7" $current><td><Marker /></td><td>3</td><td>Email</td><td>Primary Email</td></FieldRow>
              </tbody>
            </FieldTable>
          </FieldsBox>
        </Body>
      </Window>

      <Window
        id="field"
        title="Primary Email - Form Field"
        at={[146, 0, 4, 578]}
        quick={[
          <ArrowIcon />, <ArrowIcon down off />, <RefreshIcon />, <SaveIcon small />,
          <SaveBadge small kind="close" />, <UndoIcon />,
        ]}
        ribbon={<FullRibbon brand cloneOff />}
      >
        <ScrollArea>
          <ScrollBody>
            <Fieldset $open>
              <legend>Form Field Settings</legend>
              <Row $label={136}>
                <label htmlFor="field">Field:</label>
                <Combo id="field" value="Linked Contact.Primary Email" clear />
              </Row>
              <Row $label={136}>
                <label htmlFor="item">Item #:</label>
                <ComboFrame>
                  <NumberBox id="item" defaultValue="3" inputMode="numeric" />
                  <ComboArrow>
                    <Chevron up size={6} />
                    <Chevron size={6} />
                  </ComboArrow>
                </ComboFrame>
              </Row>
              <Row $label={136}>
                <label htmlFor="caption">Caption:</label>
                <TextBox id="caption" ref={caption} defaultValue="Email" />
              </Row>
              <Row $label={136} $check>
                <label htmlFor="use-group">Use Group Caption Position</label>
                <Check id="use-group" />
              </Row>
              <Row $label={136}>
                <label htmlFor="position">Caption Position:</label>
                <Combo id="position" value="Left" off />
              </Row>
              <Row $label={136}>
                <label htmlFor="tooltip">Tool Tip:</label>
                <TextBox id="tooltip" defaultValue="Enter your primary email address" />
              </Row>
              <Row $label={136} $check>
                <label htmlFor="required">Required</label>
                <Check id="required" />
              </Row>
              <Row $label={136}>
                <label htmlFor="readonly">Read Only:</label>
                <Combo id="readonly" value="No" />
              </Row>
            </Fieldset>
            <Fieldset>
              <legend>Text Settings</legend>
            </Fieldset>
          </ScrollBody>
          <ScrollTrack>
            <ScrollArrow aria-label="Scroll up"><Chevron up /></ScrollArrow>
            <ScrollThumb />
            <ScrollArrow aria-label="Scroll down"><Chevron /></ScrollArrow>
          </ScrollTrack>
        </ScrollArea>
      </Window>
    </Desktop>
  );
}
